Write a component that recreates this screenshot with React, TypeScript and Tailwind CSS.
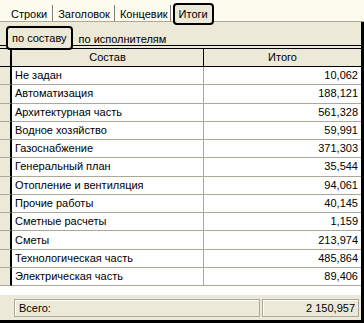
import React from "react";

const rows: [string, string][] = [
  ["Не задан", "10,062"],
  ["Автоматизация", "188,121"],
  ["Архитектурная часть", "561,328"],
  ["Водное хозяйство", "59,991"],
  ["Газоснабжение", "371,303"],
  ["Генеральный план", "35,544"],
  ["Отопление и вентиляция", "94,061"],
  ["Прочие работы", "40,145"],
  ["Сметные расчеты", "1,159"],
  ["Сметы", "213,974"],
  ["Технологическая часть", "485,864"],
  ["Электрическая часть", "89,406"],
];

export default function App() {
  return (
    <div
      className="w-[364px] h-[323px] bg-[#ECE9D8] overflow-hidden flex flex-col text-[11px] leading-[13px] text-black"
      style={{ fontFamily: '"Liberation Sans", Arial, sans-serif' }}
    >
      {/* Top tab bar */}
      <div className="h-[22px] shrink-0 bg-[#FEFCEF] border-b border-[#ACA899] flex items-start pl-[11px]">
        <span className="mt-[8px]">Строки</span>
        <span className="mt-[5px] ml-[5px] h-[16px] border-l border-[#808080]" />
        <span className="mt-[8px] ml-[5px]">Заголовок</span>
        <span className="mt-[5px] ml-[4px] h-[16px] border-l border-[#808080]" />
        <span className="mt-[8px] ml-[5px]">Концевик</span>
        <span className="mt-[5px] ml-[2px] h-[16px] border-l border-[#808080]" />
        <div className="relative z-10 mt-[3px] ml-[2px] h-[22px] px-[4px] flex items-center bg-[#ECE9D8] border-2 border-black rounded-[4px]">
          Итоги
        </div>
      </div>

      <div className="flex-1 flex flex-col border-r-[3px] border-b-[3px] border-black min-h-0">
        {/* Sub tabs */}
        <div className="h-[24px] shrink-0 border-b border-black flex items-start pl-[6px]">
          <div className="relative z-10 mt-[4px] h-[24px] px-[4px] flex items-center bg-[#ECE9D8] border-2 border-black rounded-[4px]">
            по составу
          </div>
          <span className="mt-[11px] ml-[6px]">по исполнителям</span>
        </div>
        <div className="h-[2px] shrink-0" />

        {/* Grid */}
        <div className="flex flex-col bg-white border-t border-black">
          {/* Header */}
          <div className="flex h-[18px] shrink-0 bg-[#ECE9D8] border-b border-black">
            <div className="w-[12px] border-r-2 border-black" />
            <div className="w-[192px] border-r border-black flex items-center justify-center">Состав</div>
            <div className="flex-1 flex items-center justify-center">Итого</div>
          </div>
          {rows.map(([name, val]) => (
            <div key={name} className="flex h-[18.27px] shrink-0">
              <div className="w-[12px] bg-[#ECE9D8] border-b border-[#ACA899] border-r-2 border-r-black" />
              <div className="w-[192px] border-b border-r border-[#ACA899] flex items-center pl-[3px]">{name}</div>
              <div className="flex-1 border-b border-[#ACA899] flex items-center justify-end pr-[3px]">{val}</div>
            </div>
          ))}
          <div className="h-[9px] shrink-0" />
        </div>

        {/* Footer */}
        <div className="flex-1 flex items-start pt-[4px] pl-[14px] pr-[2px] gap-[2px]">
          <div className="w-[246px] h-[18px] border border-[#ACA899] shadow-[inset_1px_1px_0_#fff] flex items-center pl-[4px]">
            Всего:
          </div>
          <div className="flex-1 h-[18px] border border-[#ACA899] shadow-[inset_1px_1px_0_#fff] flex items-center justify-end pr-[3px]">
            2 150,957
          </div>
        </div>
      </div>
    </div>
  );
}
